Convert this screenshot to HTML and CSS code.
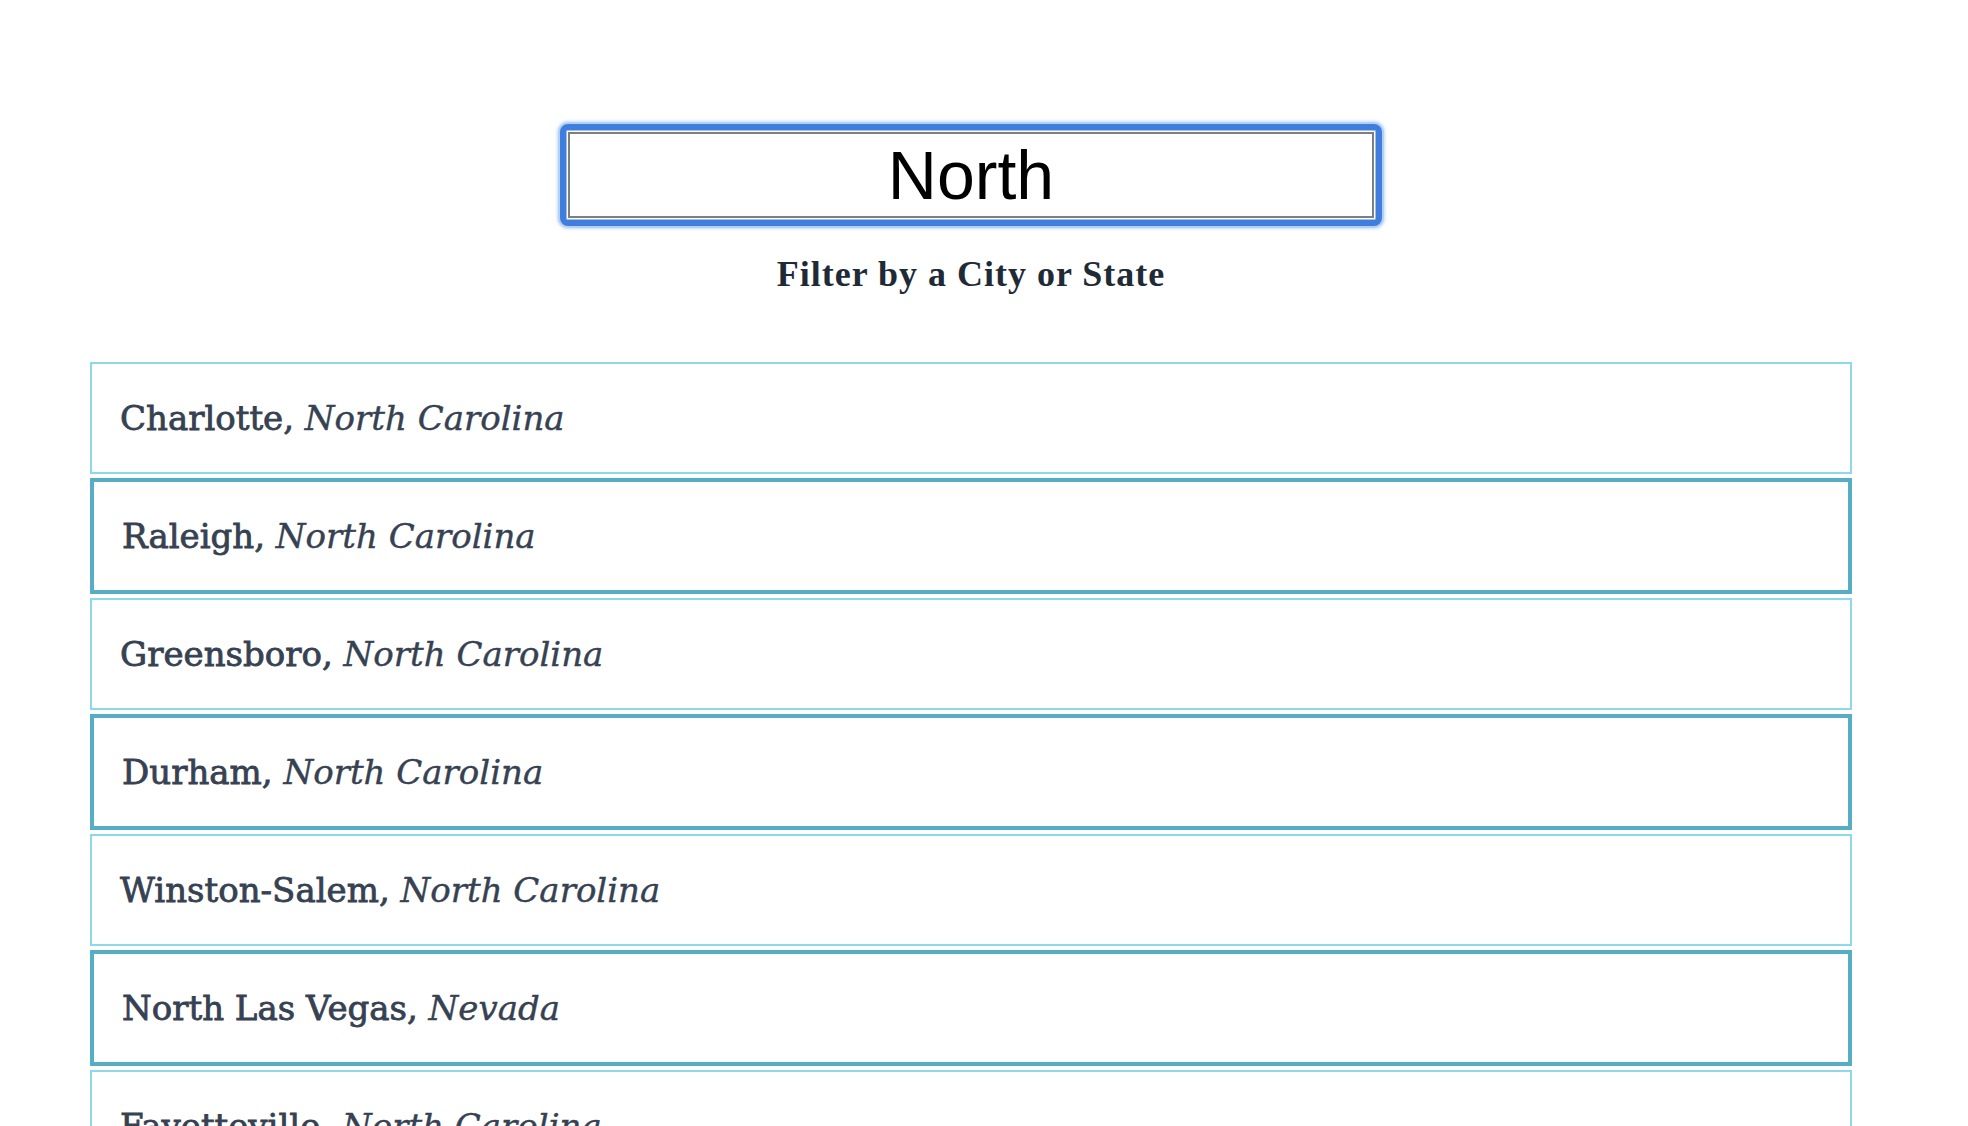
FILE: index.html
```html
<!DOCTYPE html>
<html lang="en">
<head>
<meta charset="utf-8">
<title>City Filter</title>
<link rel="stylesheet" href="styles.css">
</head>
<body>
<main class="page">
  <section class="search">
    <div class="ring">
      <input class="search-input" type="text" value="North" aria-label="Filter" autofocus>
    </div>
    <h2 class="caption">Filter by a City or State</h2>
  </section>
  <ul class="list">
    <li class="item"><span class="city">Charlotte</span>, <em class="state">North Carolina</em></li>
    <li class="item item--alt"><span class="city">Raleigh</span>, <em class="state">North Carolina</em></li>
    <li class="item"><span class="city">Greensboro</span>, <em class="state">North Carolina</em></li>
    <li class="item item--alt"><span class="city">Durham</span>, <em class="state">North Carolina</em></li>
    <li class="item"><span class="city">Winston-Salem</span>, <em class="state">North Carolina</em></li>
    <li class="item item--alt"><span class="city">North Las Vegas</span>, <em class="state">Nevada</em></li>
    <li class="item"><span class="city">Fayetteville</span>, <em class="state">North Carolina</em></li>
    <li class="item item--alt"><span class="city">Cary</span>, <em class="state">North Carolina</em></li>
  </ul>
</main>
</body>
</html>
```

FILE: styles.css
```css
html, body {
  margin: 0;
  padding: 0;
  background: #ffffff;
}

.page {
  padding: 124px 116px 0 90px;
}

.search {
  display: flex;
  flex-direction: column;
  align-items: center;
}

.ring {
  border: 6px solid #3f7edc;
  border-radius: 8px;
  padding: 2px;
  background: #ffffff;
  box-shadow: 0 0 0 2px #b5d0f7, 0 0 3px 3px rgba(160, 196, 245, 0.6), inset 0 0 0 1px #9dbff1;
}

.search-input {
  display: block;
  box-sizing: border-box;
  width: 806px;
  height: 86px;
  margin: 0;
  padding: 0;
  border: 2px solid #7f7f7f;
  outline: none;
  font-family: "Liberation Sans", Arial, sans-serif;
  font-size: 68px;
  color: #000000;
  caret-color: #000000;
  text-align: center;
  background: #ffffff;
}

.caption {
  margin: 28px 0 0;
  font-family: "Liberation Serif", "Times New Roman", serif;
  font-weight: 700;
  font-size: 36px;
  letter-spacing: 1px;
  line-height: 40px;
  color: #1f2a37;
}

.list {
  list-style: none;
  margin: 68px 0 0;
  padding: 0;
  display: flex;
  flex-direction: column;
  gap: 4px;
}

.item {
  border: 2px solid #8bd9ea;
  padding: 30px 28px;
  font-family: "DejaVu Serif", serif;
  font-size: 34px;
  line-height: 48px;
  color: #364152;
  -webkit-text-stroke: 0.8px #364152;
}

.item--alt {
  border: 4px solid #55aec4;
}

.state {
  font-style: italic;
  -webkit-text-stroke: 0.4px #364152;
}
```
